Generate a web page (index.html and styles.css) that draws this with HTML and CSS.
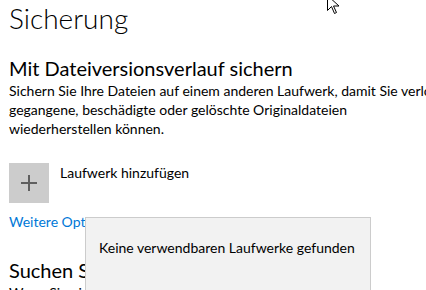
FILE: index.html
```html
<!DOCTYPE html>
<html lang="de">
  <head>
    <meta charset="UTF-8" />
    <meta name="viewport" content="width=device-width, initial-scale=1.0" />
    <title>Sicherung</title>
    <link rel="stylesheet" href="styles.css">
  </head>
  <body>
    <main class="page">
      <h1 class="page-title">Sicherung</h1>

      <section class="backup-section">
        <h2 class="section-title">Mit Dateiversionsverlauf sichern</h2>
        <p class="section-text">
          Sichern Sie Ihre Dateien auf einem anderen Laufwerk, damit Sie verloren<br>
          gegangene, beschädigte oder gelöschte Originaldateien<br>
          wiederherstellen können.
        </p>
        <button class="add-drive" type="button">
          <span class="add-drive-icon">
            <svg width="16" height="16" viewBox="0 0 16 16">
              <path d="M8 0v16M0 8h16" stroke="#5f5f5f" stroke-width="2" fill="none" />
            </svg>
          </span>
          <span class="add-drive-label">Laufwerk hinzufügen</span>
        </button>
        <a class="more-link" href="#">Weitere Optionen</a>
      </section>

      <section class="backup-section">
        <h2 class="section-title older">Suchen Sie nach einer älteren Sicherung?</h2>
        <p class="section-text narrow">
          Wenn Sie eine Sicherung mit dem Windows 7-Sicherungs- und Wiederherstellungstool erstellt haben, funktioniert diese auch unter Windows 10.
        </p>
      </section>
    </main>

    <!-- flyout opened by "Laufwerk hinzufügen" -->
    <div class="flyout">Keine verwendbaren Laufwerke gefunden</div>

    <svg class="cursor" width="13" height="20" viewBox="0 0 13 20">
      <path d="M0.5 0.5v15l4-4 3 7 2-1-3-6.5h5.5z" fill="#fff" stroke="#000" stroke-width="1" stroke-linejoin="miter" />
    </svg>
  </body>
</html>
```

FILE: styles.css
```css
body {
  margin: 0;
  width: 426px;
  height: 290px;
  overflow: hidden;
  position: relative;
  background: #fff;
  color: #000;
  font-family: Lato, "Liberation Sans", sans-serif;
}

.page {
  width: 700px;
  padding-left: 9px;
}

.page-title {
  margin: 0;
  font-size: 28px;
  font-weight: 300;
  line-height: 36px;
}

.section-title {
  margin: 19px 0 0;
  font-size: 20px;
  font-weight: 400;
  line-height: 26px;
}

.section-title.older {
  margin-top: 26px;
}

.section-text {
  margin: 0;
  font-size: 14px;
  line-height: 19px;
}

.section-text.narrow {
  max-width: 355px;
}

.add-drive {
  display: flex;
  align-items: flex-start;
  gap: 11px;
  margin-top: 25px;
  padding: 0;
  border: 0;
  background: none;
  font: inherit;
  color: inherit;
}

.add-drive-icon {
  width: 40px;
  height: 40px;
  background: #ccc;
  display: flex;
  align-items: center;
  justify-content: center;
}

.add-drive-label {
  font-size: 14px;
  line-height: 19px;
}

.more-link {
  display: block;
  margin-top: 9px;
  font-size: 14px;
  line-height: 19px;
  color: #0078d7;
  text-decoration: none;
}

.flyout {
  position: absolute;
  left: 85px;
  top: 217px;
  width: 286px;
  height: 120px;
  box-sizing: border-box;
  padding: 20px 13px;
  background: #f2f2f2;
  border: 1px solid #ccc;
  font-size: 14px;
  line-height: 19px;
}

.cursor {
  position: absolute;
  left: 327px;
  top: -5px;
}
```
